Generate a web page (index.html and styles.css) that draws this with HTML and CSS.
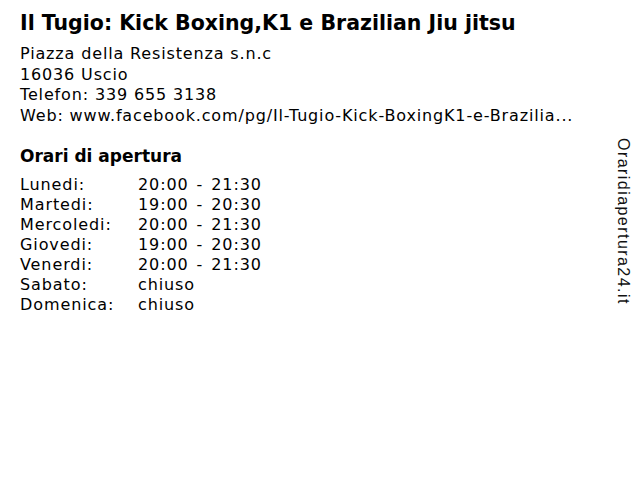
FILE: index.html
```html
<!DOCTYPE html>
<html>
<head>
<meta charset="utf-8">
<link rel="stylesheet" href="styles.css">
</head>
<body>
<div class="page">
  <main class="main">
    <h1 class="title">Il Tugio: Kick Boxing,K1 e Brazilian Jiu jitsu</h1>
    <div class="address">
      <div>Piazza della Resistenza s.n.c</div>
      <div>16036 Uscio</div>
      <div>Telefon: 339 655 3138</div>
      <div>Web: www.facebook.com/pg/Il-Tugio-Kick-BoxingK1-e-Brazilia...</div>
    </div>
    <h2 class="hours-title">Orari di apertura</h2>
    <div class="hours">
      <span>Lunedi:</span><span>20:00 - 21:30</span>
      <span>Martedi:</span><span>19:00 - 20:30</span>
      <span>Mercoledi:</span><span>20:00 - 21:30</span>
      <span>Giovedi:</span><span>19:00 - 20:30</span>
      <span>Venerdi:</span><span>20:00 - 21:30</span>
      <span>Sabato:</span><span>chiuso</span>
      <span>Domenica:</span><span>chiuso</span>
    </div>
  </main>
  <aside class="side">Oraridiapertura24.it</aside>
</div>
</body>
</html>
```
FILE: styles.css
```css
html, body { margin: 0; padding: 0; background: #fff; }
body { color: #000; }
.page {
  display: flex;
  justify-content: space-between;
  padding: 10px 7px 0 20px;
}
.main { flex: 1; }
.title {
  font-family: "DejaVu Sans", sans-serif;
  font-weight: bold;
  font-size: 20.5px;
  line-height: 26px;
  margin: 0 0 8px 0;
}
.address {
  font-family: "DejaVu Sans", sans-serif;
  font-size: 16px;
  letter-spacing: 0.85px;
  line-height: 20.5px;
}
.hours-title {
  font-family: "DejaVu Sans", sans-serif;
  font-weight: bold;
  font-size: 17px;
  line-height: 20px;
  margin: 20px 0 9px 0;
}
.hours {
  display: grid;
  grid-template-columns: 118px auto;
  font-family: "DejaVu Sans", sans-serif;
  font-size: 16px;
  letter-spacing: 0.9px;
  word-spacing: 2px;
  line-height: 20px;
}
.side {
  writing-mode: vertical-rl;
  font-family: "Liberation Sans", Arial, sans-serif;
  font-size: 16px;
  letter-spacing: 1.45px;
  color: #111;
  margin-top: 128px;
  line-height: 20px;
  align-self: flex-start;
}
```
